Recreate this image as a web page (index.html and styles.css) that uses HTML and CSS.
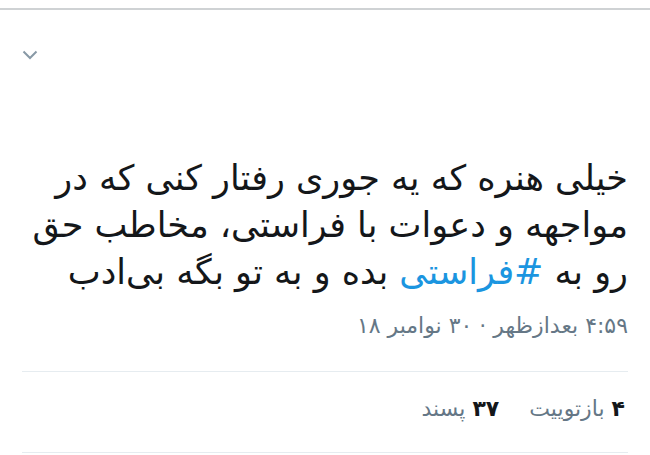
FILE: index.html
```html
<!DOCTYPE html>
<html lang="fa">
<head>
  <meta charset="UTF-8">
  <title>توییت</title>
  <link rel="stylesheet" href="styles.css">
</head>
<body>
  <div class="topbar"></div>
  <div class="tweet">
    <div class="tweet-head">
      <svg class="caret" width="16" height="10" viewBox="0 0 16 10">
        <path d="M1.5 1.5 L8 8 L14.5 1.5" fill="none" stroke="#8899a6" stroke-width="2"/>
      </svg>
    </div>
    <p class="tweet-text">خیلی هنره که یه جوری رفتار کنی که در<br>مواجهه و دعوات با فراستی، مخاطب حق<br>رو به <a href="#">#فراستی</a> بده و به تو بگه بی‌ادب</p>
    <div class="tweet-time">۴:۵۹ بعدازظهر · ۳۰ نوامبر ۱۸</div>
    <div class="tweet-stats">
      <span><b>۴</b> بازتوییت</span>
      <span><b>۳۷</b> پسند</span>
    </div>
  </div>
</body>
</html>
```

FILE: styles.css
```css
body {
  margin: 0;
  padding: 0;
  background-color: #fff;
  font-family: "DejaVu Sans", sans-serif;
  color: #14171a;
}
.topbar {
  height: 8px;
  border-bottom: 2px solid #cfd2d4;
}
.tweet {
  padding: 0 22px;
}
.tweet-head {
  height: 145px;
  padding-top: 40px;
  box-sizing: border-box;
}
.caret {
  display: block;
}
.tweet-text {
  direction: rtl;
  margin: 0;
  font-size: 35px;
  line-height: 47px;
  text-align: right;
}
.tweet-text a {
  color: #1b95e0;
  text-decoration: none;
}
.tweet-time {
  direction: rtl;
  margin-top: 17px;
  font-size: 22px;
  line-height: 26px;
  color: #657786;
  padding-bottom: 32px;
  border-bottom: 1px solid #e6ecf0;
}
.tweet-stats {
  direction: rtl;
  display: flex;
  gap: 30px;
  font-size: 22px;
  line-height: 26px;
  color: #657786;
  padding: 24px 3px 30px 0;
  border-bottom: 1px solid #e6ecf0;
}
.tweet-stats b {
  color: #14171a;
}
```
